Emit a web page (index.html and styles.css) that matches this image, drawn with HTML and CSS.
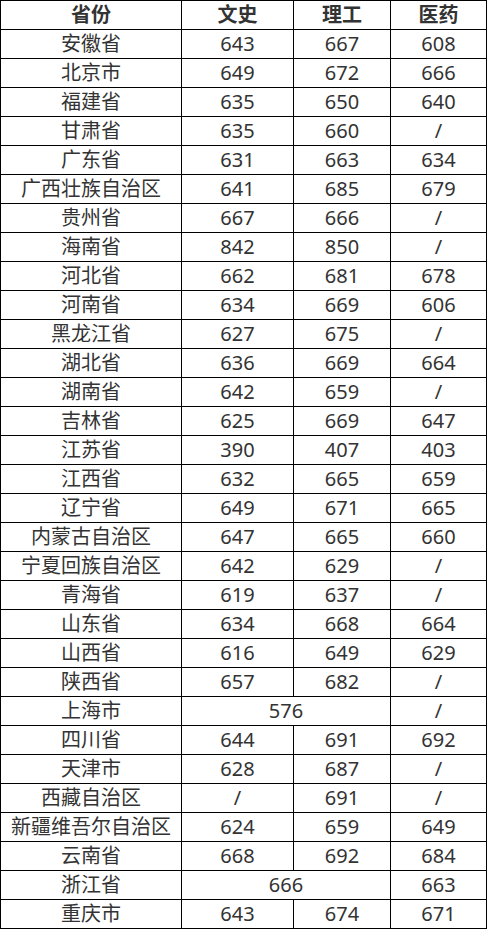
FILE: index.html
```html
<!DOCTYPE html>
<html lang="zh-CN">
<head>
<meta charset="utf-8">
<title>分数线</title>
<link rel="stylesheet" href="styles.css">
</head>
<body>
<div class="grid">
  <div class="c h">省份</div><div class="c h">文史</div><div class="c h">理工</div><div class="c h">医药</div>
  <div class="c">安徽省</div><div class="c">643</div><div class="c">667</div><div class="c">608</div>
  <div class="c">北京市</div><div class="c">649</div><div class="c">672</div><div class="c">666</div>
  <div class="c">福建省</div><div class="c">635</div><div class="c">650</div><div class="c">640</div>
  <div class="c">甘肃省</div><div class="c">635</div><div class="c">660</div><div class="c">/</div>
  <div class="c">广东省</div><div class="c">631</div><div class="c">663</div><div class="c">634</div>
  <div class="c">广西壮族自治区</div><div class="c">641</div><div class="c">685</div><div class="c">679</div>
  <div class="c">贵州省</div><div class="c">667</div><div class="c">666</div><div class="c">/</div>
  <div class="c">海南省</div><div class="c">842</div><div class="c">850</div><div class="c">/</div>
  <div class="c">河北省</div><div class="c">662</div><div class="c">681</div><div class="c">678</div>
  <div class="c">河南省</div><div class="c">634</div><div class="c">669</div><div class="c">606</div>
  <div class="c">黑龙江省</div><div class="c">627</div><div class="c">675</div><div class="c">/</div>
  <div class="c">湖北省</div><div class="c">636</div><div class="c">669</div><div class="c">664</div>
  <div class="c">湖南省</div><div class="c">642</div><div class="c">659</div><div class="c">/</div>
  <div class="c">吉林省</div><div class="c">625</div><div class="c">669</div><div class="c">647</div>
  <div class="c">江苏省</div><div class="c">390</div><div class="c">407</div><div class="c">403</div>
  <div class="c">江西省</div><div class="c">632</div><div class="c">665</div><div class="c">659</div>
  <div class="c">辽宁省</div><div class="c">649</div><div class="c">671</div><div class="c">665</div>
  <div class="c">内蒙古自治区</div><div class="c">647</div><div class="c">665</div><div class="c">660</div>
  <div class="c">宁夏回族自治区</div><div class="c">642</div><div class="c">629</div><div class="c">/</div>
  <div class="c">青海省</div><div class="c">619</div><div class="c">637</div><div class="c">/</div>
  <div class="c">山东省</div><div class="c">634</div><div class="c">668</div><div class="c">664</div>
  <div class="c">山西省</div><div class="c">616</div><div class="c">649</div><div class="c">629</div>
  <div class="c">陕西省</div><div class="c">657</div><div class="c">682</div><div class="c">/</div>
  <div class="c">上海市</div><div class="c span2">576</div><div class="c">/</div>
  <div class="c">四川省</div><div class="c">644</div><div class="c">691</div><div class="c">692</div>
  <div class="c">天津市</div><div class="c">628</div><div class="c">687</div><div class="c">/</div>
  <div class="c">西藏自治区</div><div class="c">/</div><div class="c">691</div><div class="c">/</div>
  <div class="c">新疆维吾尔自治区</div><div class="c">624</div><div class="c">659</div><div class="c">649</div>
  <div class="c">云南省</div><div class="c">668</div><div class="c">692</div><div class="c">684</div>
  <div class="c">浙江省</div><div class="c span2">666</div><div class="c">663</div>
  <div class="c">重庆市</div><div class="c">643</div><div class="c">674</div><div class="c">671</div>
</div>
</body>
</html>
```

FILE: styles.css
```css
html, body {
  margin: 0;
  padding: 0;
  background: #fff;
}
.grid {
  display: grid;
  grid-template-columns: 181px 112px 97px 96px;
  grid-auto-rows: 29px;
  width: 487px;
  box-sizing: border-box;
  border-top: 1px solid #000;
  border-left: 1px solid #000;
  font-family: "Noto Sans", "Noto Sans CJK SC", sans-serif;
  font-size: 20px;
  color: #333;
}
.c {
  box-sizing: border-box;
  border-right: 1px solid #000;
  border-bottom: 1px solid #000;
  display: flex;
  align-items: center;
  justify-content: center;
  white-space: nowrap;
  line-height: 1;
}
.h {
  font-weight: bold;
}
.span2 {
  grid-column: span 2;
}
```
